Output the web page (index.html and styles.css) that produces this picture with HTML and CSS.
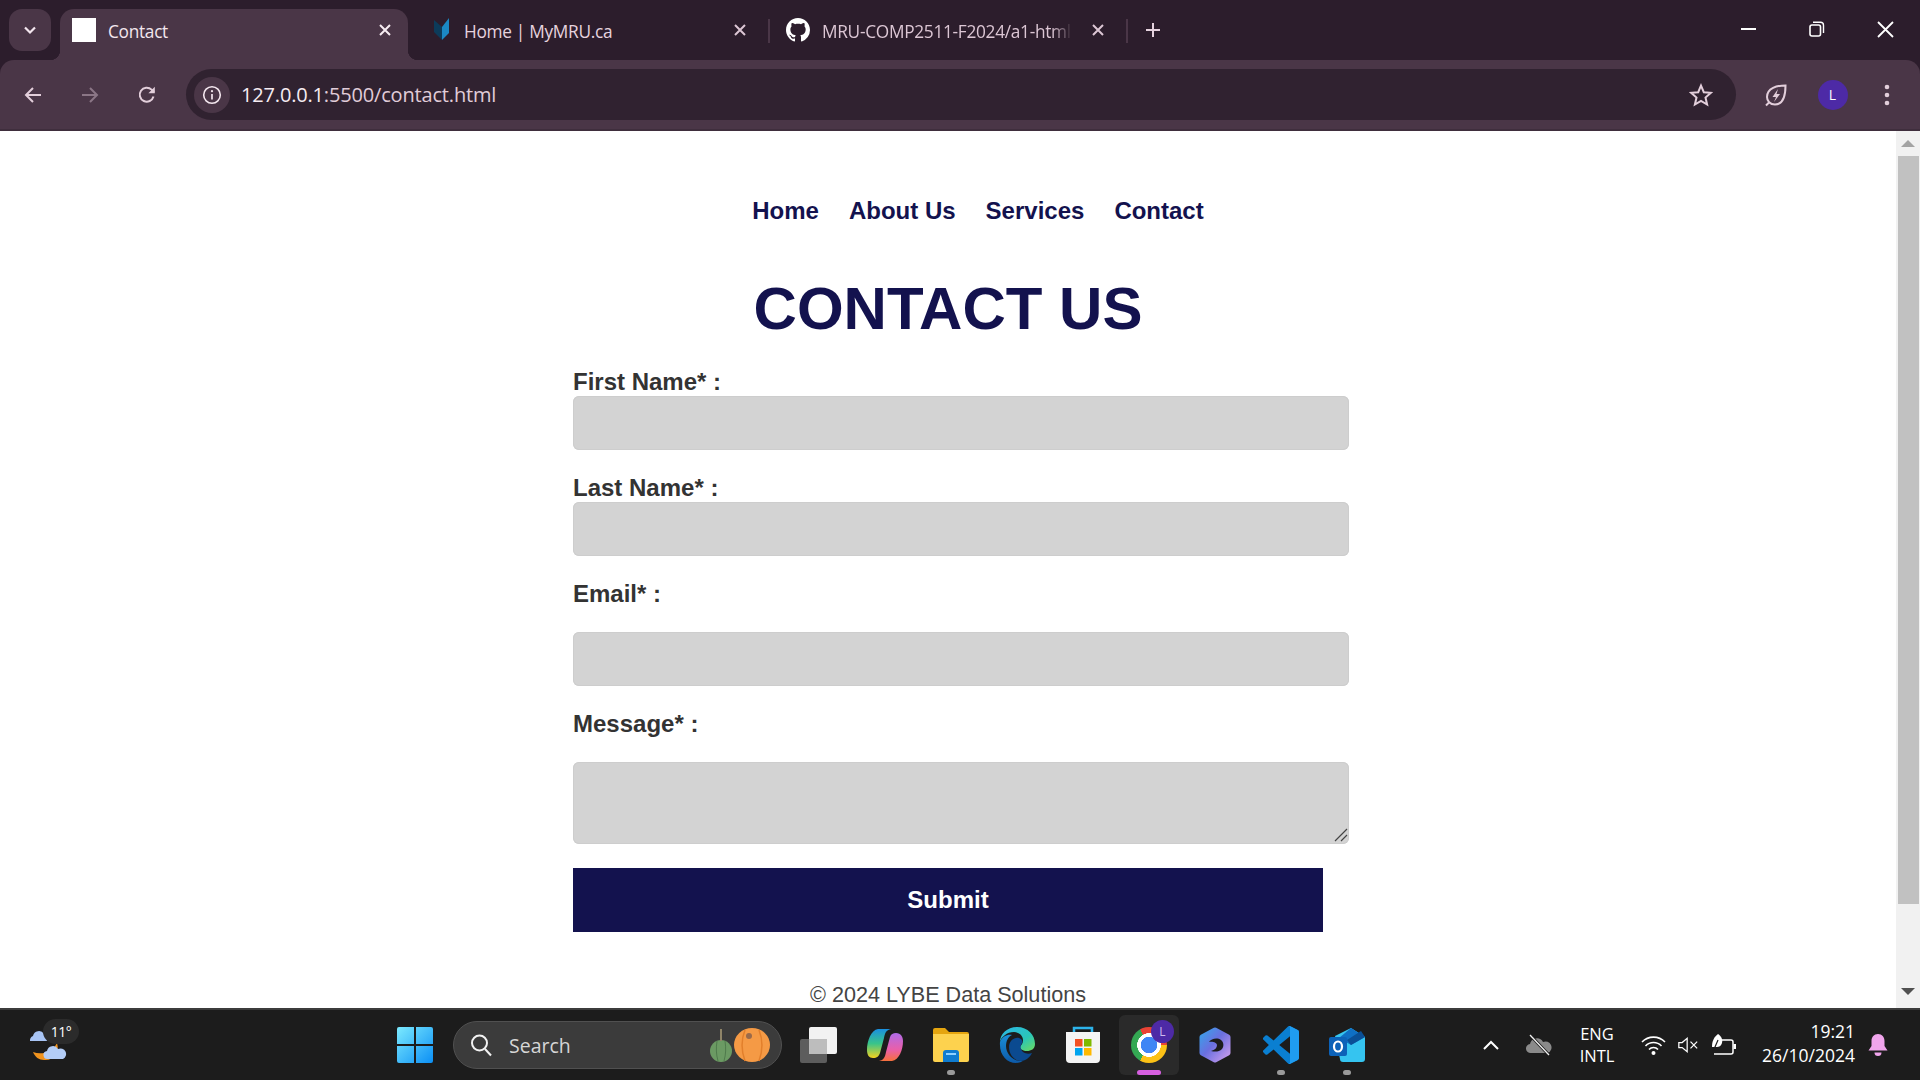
FILE: index.html
```html
<!DOCTYPE html>
<html lang="en">
<head>
    <meta charset="UTF-8">
    <meta name="viewport" content="width=device-width, initial-scale=1.0">
    <title>Contact</title>
    <link rel="stylesheet" href="styles.css">
</head>
<body>
    <div class="tabstrip">
        <div class="tab-search">
            <svg width="16" height="16" viewBox="0 0 16 16"><path d="M3 5.5l5 5 5-5" fill="none" stroke="#f3e6ee" stroke-width="2.2"/></svg>
        </div>
        <div class="tab tab-active">
            <div class="favicon-blank"></div>
            <span class="tab-title">Contact</span>
            <svg class="tab-close" width="14" height="14" viewBox="0 0 14 14"><path d="M2 2l10 10M12 2L2 12" stroke="#f6ecf2" stroke-width="2"/></svg>
        </div>
        <div class="tab tab-second">
            <svg class="favicon" width="18" height="24" viewBox="0 0 18 24"><path d="M1 2l8 7v13L1 14z" fill="#0c3b5a"/><path d="M16 0v15l-7 7V9z" fill="#1b88c4"/></svg>
            <span class="tab-title">Home | MyMRU.ca</span>
            <svg class="tab-close" width="14" height="14" viewBox="0 0 14 14"><path d="M2 2l10 10M12 2L2 12" stroke="#dcc6d4" stroke-width="2"/></svg>
        </div>
        <div class="tab-sep"></div>
        <div class="tab tab-third">
            <svg class="favicon" width="24" height="24" viewBox="0 0 16 16"><path fill="#fff" d="M8 0C3.58 0 0 3.58 0 8c0 3.54 2.29 6.53 5.47 7.59.4.07.55-.17.55-.38 0-.19-.01-.82-.01-1.49-2.01.37-2.53-.49-2.69-.94-.09-.23-.48-.94-.82-1.13-.28-.15-.68-.52-.01-.53.63-.01 1.08.58 1.23.82.72 1.21 1.87.87 2.33.66.07-.52.28-.87.51-1.07-1.78-.2-3.64-.89-3.64-3.95 0-.87.31-1.59.82-2.15-.08-.2-.36-1.02.08-2.12 0 0 .67-.21 2.2.82.64-.18 1.32-.27 2-.27.68 0 1.36.09 2 .27 1.53-1.04 2.2-.82 2.2-.82.44 1.1.16 1.92.08 2.12.51.56.82 1.27.82 2.15 0 3.07-1.87 3.75-3.65 3.95.29.25.54.73.54 1.48 0 1.07-.01 1.93-.01 2.2 0 .21.15.46.55.38A8.013 8.013 0 0016 8c0-4.42-3.58-8-8-8z"/></svg>
            <span class="tab-title tab-title-fade">MRU-COMP2511-F2024/a1-html</span>
            <svg class="tab-close" width="14" height="14" viewBox="0 0 14 14"><path d="M2 2l10 10M12 2L2 12" stroke="#dcc6d4" stroke-width="2"/></svg>
        </div>
        <div class="tab-sep"></div>
        <div class="tab-new">
            <svg width="16" height="16" viewBox="0 0 16 16"><path d="M8 1v14M1 8h14" stroke="#e6d3df" stroke-width="2"/></svg>
        </div>
        <div class="win-controls">
            <div class="win-btn"><svg width="16" height="16" viewBox="0 0 16 16"><path d="M0 8h15" stroke="#fff" stroke-width="2"/></svg></div>
            <div class="win-btn"><svg width="16" height="16" viewBox="0 0 16 16"><rect x="1" y="4" width="10.5" height="11" rx="2" fill="none" stroke="#fff" stroke-width="1.6"/><path d="M4 1.2h7.5a3 3 0 0 1 3 3V12" fill="none" stroke="#fff" stroke-width="1.4"/></svg></div>
            <div class="win-btn"><svg width="17" height="17" viewBox="0 0 17 17"><path d="M1 1l15 15M16 1L1 16" stroke="#fff" stroke-width="1.8"/></svg></div>
        </div>
    </div>

    <div class="toolbar">
        <div class="tool-btn"><svg width="20" height="20" viewBox="0 0 20 20"><path d="M18 10H3M10 3l-7 7 7 7" fill="none" stroke="#e3cfdb" stroke-width="2"/></svg></div>
        <div class="tool-btn"><svg width="20" height="20" viewBox="0 0 20 20"><path d="M2 10h15M10 3l7 7-7 7" fill="none" stroke="#8b7686" stroke-width="2"/></svg></div>
        <div class="tool-btn"><svg width="20" height="20" viewBox="0 0 20 20"><path d="M16.5 11.5A7 7 0 1 1 14.6 4.6L17 7" fill="none" stroke="#e3cfdb" stroke-width="2"/><path d="M17.8 1.8v6.4h-6.4z" fill="#e3cfdb"/></svg></div>
        <div class="omnibox">
            <div class="site-info">
                <svg width="20" height="20" viewBox="0 0 20 20"><circle cx="10" cy="10" r="8.3" fill="none" stroke="#f3e6ee" stroke-width="1.6"/><path d="M10 9v5.5" stroke="#f3e6ee" stroke-width="1.7"/><circle cx="10" cy="6.2" r="1.1" fill="#f3e6ee"/></svg>
            </div>
            <span class="url"><span class="url-host">127.0.0.1</span>:5500/contact.html</span>
            <svg class="star" width="24" height="24" viewBox="0 0 24 24"><path d="M12 2.6l2.8 6.6 7.1.6-5.4 4.7 1.6 7-6.1-3.7-6.1 3.7 1.6-7-5.4-4.7 7.1-.6z" fill="none" stroke="#e3cfdb" stroke-width="2" stroke-linejoin="miter"/></svg>
        </div>
        <div class="tool-btn tool-first">
            <svg width="24" height="24" viewBox="0 0 24 24"><path d="M21.5 2.5C13 2.5 3 5 3 14c0 4 3 7.5 8 7.5 8 0 10.5-9 10.5-19z" fill="none" stroke="#e3cfdb" stroke-width="2"/><path d="M2 22.5l3-3" stroke="#e3cfdb" stroke-width="2"/><path d="M14 6l-5.5 8H12l-2 5 6-8h-3.5l1.5-5z" fill="#e3cfdb"/></svg>
        </div>
        <div class="tool-btn"><div class="avatar">L</div></div>
        <div class="tool-btn tool-last">
            <svg width="6" height="24" viewBox="0 0 6 24"><circle cx="3" cy="4" r="2.3" fill="#e3cfdb"/><circle cx="3" cy="12" r="2.3" fill="#e3cfdb"/><circle cx="3" cy="20" r="2.3" fill="#e3cfdb"/></svg>
        </div>
    </div>

    <div class="viewport">
        <div class="page">
            <ul class="nav">
                <li><a href="#">Home</a></li>
                <li><a href="#">About Us</a></li>
                <li><a href="#">Services</a></li>
                <li><a href="#">Contact</a></li>
            </ul>
            <h1>CONTACT US</h1>
            <form class="contact-form">
                <label for="first">First Name* :</label>
                <input type="text" id="first">
                <label for="last">Last Name* :</label>
                <input type="text" id="last">
                <label for="email" class="label-wide">Email* :</label>
                <input type="text" id="email">
                <label for="message" class="label-wide">Message* :</label>
                <div class="message-box">
                    <textarea id="message"></textarea>
                    <svg class="grip" width="14" height="14" viewBox="0 0 14 14"><path d="M1 13L13 1M7 13l6-6" stroke="#444" stroke-width="1.2"/></svg>
                </div>
                <button type="button">Submit</button>
            </form>
            <footer class="page-footer">© 2024 LYBE Data Solutions</footer>
        </div>
        <div class="scrollbar">
            <div class="arrow-up"></div>
            <div class="thumb"></div>
            <div class="arrow-down"></div>
        </div>
    </div>

    <div class="taskbar">
        <div class="weather">
            <svg width="38" height="34" viewBox="0 0 38 34"><path d="M28 15c3 9-3 18-13 17-5 0-9-3-11-8 8 3 19 1 24-9z" fill="#f0931e"/><path d="M1 13a5 5 0 0 1 3-5 6 6 0 0 1 11-2h3v7z" fill="#a8c4f4"/><path d="M19 31a4 4 0 0 1-1-8 6 6 0 0 1 11-2 5 5 0 0 1 5 10z" fill="#b3cdf7"/></svg>
            <span class="temp">11°</span>
        </div>
        <div class="start">
            <svg width="36" height="36" viewBox="0 0 36 36">
                <defs><linearGradient id="win" x1="0" y1="0" x2="1" y2="1"><stop offset="0" stop-color="#7ceafe"/><stop offset="1" stop-color="#0b8ff5"/></linearGradient></defs>
                <path d="M0 2a2 2 0 0 1 2-2h15v17H0zM19 0h15a2 2 0 0 1 2 2v15H19zM0 19h17v17H2a2 2 0 0 1-2-2zM19 19h17v15a2 2 0 0 1-2 2H19z" fill="url(#win)"/>
            </svg>
        </div>
        <div class="search">
            <svg width="24" height="24" viewBox="0 0 24 24"><circle cx="10.5" cy="10" r="7.5" fill="none" stroke="#f2f2f2" stroke-width="2"/><path d="M16 16l6 6.5" stroke="#f2f2f2" stroke-width="2"/></svg>
            <span class="search-text">Search</span>
            <svg class="pumpkins" width="62" height="36" viewBox="0 0 62 36">
                <ellipse cx="12" cy="24" rx="11" ry="11" fill="#6b9a63"/><path d="M12 14V2" stroke="#8f8468" stroke-width="2"/><path d="M8 14c-1 7-1 13 1 20M16 14c1 7 1 13-1 20" stroke="#4f7a4c" fill="none"/>
                <ellipse cx="43" cy="18" rx="18" ry="17" fill="#f59a45"/><path d="M36 3c-4 10-4 20 0 31M50 3c4 10 4 20 0 31" stroke="#e27f2b" fill="none" stroke-width="1.5"/><circle cx="40" cy="9" r="3" fill="#9a6a4a"/>
            </svg>
        </div>
        <div class="apps">
            <div class="app">
                <svg width="38" height="36" viewBox="0 0 38 36"><rect x="0" y="12" width="27" height="24" rx="2" fill="#5d5d5d"/><rect x="9" y="0" width="28" height="27" rx="2" fill="#f2f2f2"/><rect x="9" y="12" width="18" height="15" fill="#bdbdbd"/></svg>
            </div>
            <div class="app">
                <svg width="36" height="34" viewBox="0 0 36 34">
                    <defs>
                        <linearGradient id="cop1" x1="0" y1="0" x2="0" y2="1"><stop offset="0" stop-color="#1a8fe0"/><stop offset=".5" stop-color="#38c48a"/><stop offset="1" stop-color="#f4d21e"/></linearGradient>
                        <linearGradient id="cop2" x1="0" y1="0" x2="0" y2="1"><stop offset="0" stop-color="#b06be8"/><stop offset=".6" stop-color="#ea5fa8"/><stop offset="1" stop-color="#f6703c"/></linearGradient>
                    </defs>
                    <path d="M11 1h13c-5 1-6 4-7 9l-4 15c-1 3-3 5-7 5-4 0-6-3-6-8 0-9 4-20 11-21z" fill="url(#cop1)"/>
                    <path d="M25 33H12c5-1 6-4 7-9l4-15c1-3 3-4 6-4 5 0 7 4 7 8 0 9-4 19-11 20z" fill="url(#cop2)"/>
                </svg>
            </div>
            <div class="app">
                <svg width="36" height="34" viewBox="0 0 36 34"><path d="M0 2a2 2 0 0 1 2-2h10l4 4h18a2 2 0 0 1 2 2v5H0z" fill="#e5a50f"/><path d="M0 6h36v26a2 2 0 0 1-2 2H2a2 2 0 0 1-2-2z" fill="#fdd24e"/><path d="M10 34V25a3 3 0 0 1 3-3h10a3 3 0 0 1 3 3v9z" fill="#0f7cd0"/><rect x="13" y="25" width="10" height="2" fill="#8ed1ff"/></svg>
            </div>
            <div class="app">
                <svg width="36" height="36" viewBox="0 0 36 36">
                    <defs>
                        <linearGradient id="edge1" x1="0" y1="0" x2="1" y2="1"><stop offset="0" stop-color="#2bb6e8"/><stop offset=".6" stop-color="#2ac6b8"/><stop offset="1" stop-color="#6fdc5c"/></linearGradient>
                        <linearGradient id="edge2" x1="0" y1="0" x2="0" y2="1"><stop offset="0" stop-color="#1a8fd8"/><stop offset="1" stop-color="#0d5aa8"/></linearGradient>
                    </defs>
                    <path d="M18 0c11 0 18 8 18 17 0 5-4 7-8 7-4 0-7-2-7-4 1-2 3-3 3-7 0-5-5-8-9-8C8 5 2 10 1 15 1 7 8 0 18 0z" fill="url(#edge1)"/>
                    <path d="M1 15C3 9 9 7 13 8c-4 2-6 6-6 11 0 8 7 15 15 15 1 0 2 0 3-1-2 2-5 3-8 3C8 36 0 28 1 15z" fill="url(#edge2)"/>
                    <path d="M10 20c0-6 5-10 10-9 3 1 4 3 3 5-2 3-2 6 1 9 3 2 6 2 9 1-2 4-6 8-11 8-7 0-12-7-12-14z" fill="#0b4a90"/>
                </svg>
            </div>
            <div class="app">
                <svg width="36" height="38" viewBox="0 0 36 38"><path d="M9 6V2h18v4" fill="none" stroke="#2cb3ea" stroke-width="2.5"/><path d="M1 6h34v27a4 4 0 0 1-4 4H5a4 4 0 0 1-4-4z" fill="#f4f4f4"/><rect x="10" y="13" width="7.5" height="7.5" fill="#f25022"/><rect x="19" y="13" width="7.5" height="7.5" fill="#7fba00"/><rect x="10" y="22" width="7.5" height="7.5" fill="#00a4ef"/><rect x="19" y="22" width="7.5" height="7.5" fill="#ffb900"/></svg>
            </div>
            <div class="app app-open">
                <div class="chrome-icon"></div>
                <div class="chrome-badge">L</div>
                <div class="app-bar"></div>
            </div>
            <div class="app">
                <svg width="32" height="36" viewBox="0 0 32 36">
                    <defs><linearGradient id="m365" x1="0" y1="0" x2="1" y2="1"><stop offset="0" stop-color="#3aa0e8"/><stop offset=".45" stop-color="#6a6fe0"/><stop offset="1" stop-color="#c99cec"/></linearGradient></defs>
                    <path d="M16 3l13 7v16l-13 7-13-7V10z" fill="url(#m365)" stroke="url(#m365)" stroke-width="5" stroke-linejoin="round"/>
                    <path d="M10 15c2-3 8-5 12-2 3 2 3 7 1 9-3 3-7 3-11 2 4-1 6-3 6-6 0-2-4-4-8-3z" fill="#1c1c1c"/>
                </svg>
            </div>
            <div class="app">
                <svg width="36" height="38" viewBox="0 0 24 24" preserveAspectRatio="none"><path fill="#0a7fd1" d="M23.15 2.587L18.21.21a1.494 1.494 0 0 0-1.705.29l-9.46 8.63-4.12-3.128a.999.999 0 0 0-1.276.057L.327 7.261A1 1 0 0 0 .326 8.74L3.899 12 .326 15.26a1 1 0 0 0 .001 1.479L1.65 17.94a.999.999 0 0 0 1.276.057l4.12-3.128 9.46 8.63a1.492 1.492 0 0 0 1.704.29l4.942-2.377A1.5 1.5 0 0 0 24 20.06V3.939a1.5 1.5 0 0 0-.85-1.352zm-5.146 14.861L10.826 12l7.178-5.448v10.896z"/><path fill="#1f9cf0" d="M16.5.5a1.5 1.5 0 0 1 1.71-.29l4.94 2.377A1.5 1.5 0 0 1 24 3.939V20.06a1.5 1.5 0 0 1-.85 1.352l-4.94 2.378a1.5 1.5 0 0 1-1.71-.29c.6.6 1.5.2 1.5-.6V1.1c0-.8-.9-1.2-1.5-.6z"/></svg>
            </div>
            <div class="app">
                <svg width="36" height="34" viewBox="0 0 36 34"><path d="M6 8L22 0l14 9v22a3 3 0 0 1-3 3H14a3 3 0 0 1-3-3z" fill="#35c4f0"/><path d="M10 10L22 0l14 9-14 8z" fill="#0f6fc4"/><path d="M22 17l14-8v0l-4-6-14 9z" fill="#0a4f96"/><rect x="0" y="9" width="18" height="19" rx="2" fill="#0c62b8"/><ellipse cx="9" cy="18.5" rx="4" ry="5" fill="none" stroke="#fff" stroke-width="2.2"/></svg>
            </div>
        </div>
        <div class="tray">
            <div class="tray-caret"><svg width="16" height="10" viewBox="0 0 16 10"><path d="M1 9l7-7 7 7" fill="none" stroke="#fff" stroke-width="2"/></svg></div>
            <div class="tray-cloud"><svg width="26" height="22" viewBox="0 0 26 22"><path d="M5 19a4.5 4.5 0 0 1-1-9 7 7 0 0 1 13-2 5.5 5.5 0 0 1 5 11z" fill="#8a8a8a"/><path d="M4 1l19 20" stroke="#1c1c1c" stroke-width="3"/><path d="M4 1l19 20" stroke="#f2f2f2" stroke-width="1.3"/></svg></div>
            <div class="tray-lang">ENG<br>INTL</div>
            <div class="tray-wifi"><svg width="25" height="20" viewBox="0 0 25 20"><path d="M1 7a16 16 0 0 1 23 0M4.5 11a11 11 0 0 1 16 0M8 14.5a6 6 0 0 1 9 0" fill="none" stroke="#fff" stroke-width="1.6"/><circle cx="12.5" cy="18" r="2" fill="#fff"/></svg></div>
            <div class="tray-speaker"><svg width="24" height="20" viewBox="0 0 24 20"><path d="M1 7v6h4l6 5V2L5 7z" fill="none" stroke="#fff" stroke-width="1.5"/><path d="M15 6l8 8M23 6l-8 8" stroke="#fff" stroke-width="1.5"/></svg></div>
            <div class="tray-battery"><svg width="26" height="22" viewBox="0 0 26 22"><path d="M11 6h9a2 2 0 0 1 2 2v10a2 2 0 0 1-2 2H3" fill="none" stroke="#fff" stroke-width="1.5"/><rect x="22.5" y="10" width="2.5" height="5" fill="#fff"/><path d="M7 0c3 2 5 5 4 9-1 3-3 4-5 4H1c0-6 2-10 6-13z" fill="#fff"/><path d="M1 20L7 6" stroke="#1c1c1c" stroke-width="1.2"/></svg></div>
            <div class="tray-clock">19:21<br>26/10/2024</div>
            <div class="tray-bell"><svg width="20" height="24" viewBox="0 0 20 24"><path d="M10 1c4 0 6.5 3 6.5 7v5l3 4.5H.5l3-4.5V8c0-4 2.5-7 6.5-7z" fill="#f0a5ec"/><path d="M6.5 19.5h7a3.5 3.5 0 0 1-7 0z" fill="#f0a5ec"/></svg></div>
        </div>
    </div>
</body>
</html>
```

FILE: styles.css
```css
* {
    box-sizing: border-box;
}
html, body {
    height: 100%;
}
body {
    margin: 0;
    display: flex;
    flex-direction: column;
    height: 1080px;
    overflow: hidden;
    font-family: "Liberation Sans", Arial, sans-serif;
    background: #2c1d2c;
}

/* browser tabs */
.tabstrip {
    height: 60px;
    flex: none;
    display: flex;
    align-items: flex-end;
    padding-left: 9px;
    background: #2c1d2c;
    font-family: "Open Sans", "Noto Sans", sans-serif;
    font-size: 17.3px;
}
.tab-search {
    width: 42px;
    height: 42px;
    margin-bottom: 9px;
    margin-right: 9px;
    border-radius: 13px;
    background: #4a3647;
    display: flex;
    align-items: center;
    justify-content: center;
}
.tab {
    height: 51px;
    display: flex;
    align-items: center;
    flex: none;
}
.tab-active {
    position: relative;
    width: 348px;
    padding: 0 16px 9px 12px;
    background: #4a3647;
    border-radius: 14px 14px 0 0;
    color: #f3e6ee;
}
.tab-active::before, .tab-active::after {
    content: "";
    position: absolute;
    bottom: 0;
    width: 10px;
    height: 10px;
}
.tab-active::before {
    left: -10px;
    background: radial-gradient(circle at 0 0, transparent 10px, #4a3647 10.5px);
}
.tab-active::after {
    right: -10px;
    background: radial-gradient(circle at 100% 0, transparent 10px, #4a3647 10.5px);
}
.tab-second {
    width: 360px;
    padding: 0 21px 9px 25px;
    color: #e6d3df;
}
.tab-third {
    width: 356px;
    padding: 0 21px 9px 16px;
    color: #dcc6d4;
}
.favicon-blank {
    width: 24px;
    height: 24px;
    background: #fff;
    margin-right: 12px;
    flex: none;
}
.favicon {
    flex: none;
    margin-right: 12px;
}
.tab-second .favicon {
    margin-right: 13px;
}
.tab-title {
    flex: 1;
    padding-top: 2px;
    white-space: nowrap;
    overflow: hidden;
    letter-spacing: -0.3px;
}
.tab-title-fade {
    margin-right: 19px;
    -webkit-mask-image: linear-gradient(to right, #000 92%, transparent);
    mask-image: linear-gradient(to right, #000 92%, transparent);
}
.tab-close {
    flex: none;
}
.tab-sep {
    width: 2px;
    height: 24px;
    margin-bottom: 17px;
    background: #4a3647;
    flex: none;
}
.tab-new {
    width: 50px;
    height: 51px;
    padding-bottom: 9px;
    display: flex;
    align-items: center;
    justify-content: center;
}
.win-controls {
    margin-left: auto;
    align-self: stretch;
    display: flex;
}
.win-btn {
    width: 68.5px;
    display: flex;
    align-items: center;
    justify-content: center;
    padding-bottom: 2px;
}

/* address bar row */
.toolbar {
    height: 71px;
    flex: none;
    display: flex;
    align-items: center;
    padding: 0 2px 0 4px;
    background: #4a3647;
    border-radius: 14px 14px 0 0;
    border-bottom: 2px solid #3f2e3d;
    font-family: "Open Sans", "Noto Sans", sans-serif;
}
.tool-btn {
    width: 57px;
    display: flex;
    align-items: center;
    justify-content: center;
    flex: none;
}
.tool-first {
    margin-left: 11px;
}
.tool-last {
    padding-right: 5px;
}
.omnibox {
    flex: 1;
    height: 51px;
    margin-left: 11px;
    padding: 0 23px 0 8px;
    display: flex;
    align-items: center;
    border-radius: 26px;
    background: #302230;
}
.site-info {
    width: 36px;
    height: 36px;
    border-radius: 50%;
    background: #4a3647;
    display: flex;
    align-items: center;
    justify-content: center;
    margin-right: 11px;
}
.url {
    flex: 1;
    font-size: 20px;
    letter-spacing: -0.17px;
    color: #e0ccd8;
}
.url-host {
    color: #f6ecf2;
}
.avatar {
    width: 30px;
    height: 30px;
    border-radius: 50%;
    background: #4d2aa6;
    color: #fff;
    font-size: 14px;
    text-align: center;
    line-height: 30px;
}

/* page */
.viewport {
    flex: 1;
    display: flex;
    min-height: 0;
    background: #fff;
}
.page {
    flex: 1;
    overflow: hidden;
    padding-top: 66px;
}
.nav {
    list-style: none;
    margin: 0;
    padding: 0 0 0 60px;
    display: flex;
    justify-content: center;
    gap: 30px;
    font-size: 24px;
    font-weight: bold;
}
.nav a {
    color: #13124e;
    text-decoration: none;
}
h1 {
    margin: 49px 0 25px;
    text-align: center;
    font-size: 60px;
    color: #13124e;
}
.contact-form {
    width: 750px;
    margin: 0 auto;
}
label {
    display: block;
    margin-top: 24px;
    font-size: 24px;
    line-height: 28px;
    font-weight: bold;
    color: #333;
}
.contact-form label:first-child {
    margin-top: 0;
}
.label-wide {
    margin-bottom: 24px;
}
input, textarea {
    display: block;
    box-sizing: content-box;
    width: 100%;
    padding: 0 13px;
    border: 0;
    border-radius: 6px;
    background: #d3d3d3;
    box-shadow: inset 0 0 0 1px #cdcdcd;
}
input {
    height: 54px;
}
textarea {
    height: 82px;
    resize: none;
}
.message-box {
    position: relative;
}
.grip {
    position: absolute;
    left: 761px;
    bottom: 2px;
}
button {
    display: block;
    width: 100%;
    height: 64px;
    margin-top: 24px;
    border: 0;
    background: #13124e;
    color: #fff;
    font-family: inherit;
    font-size: 24px;
    font-weight: bold;
    cursor: pointer;
}
.page-footer {
    margin-top: 50px;
    text-align: center;
    font-size: 21.6px;
    color: #444;
}
.scrollbar {
    width: 24px;
    flex: none;
    background: #f1f1f1;
    display: flex;
    flex-direction: column;
    align-items: center;
}
.arrow-up {
    margin-top: 9px;
    border: 7px solid transparent;
    border-top: 0;
    border-bottom: 7px solid #a3a3a3;
}
.thumb {
    width: 21px;
    height: 748px;
    margin-top: 9px;
    background: #c1c1c1;
}
.arrow-down {
    margin-top: 84px;
    border: 7px solid transparent;
    border-bottom: 0;
    border-top: 7px solid #505050;
}

/* windows taskbar */
.taskbar {
    height: 72px;
    flex: none;
    display: flex;
    align-items: center;
    background: #1c1c1c;
    border-top: 2px solid #3c3c3c;
    font-family: "Open Sans", "Noto Sans", sans-serif;
    color: #fff;
}
.weather {
    position: relative;
    width: 382px;
    padding-left: 29px;
    display: flex;
    align-items: center;
    flex: none;
}
.temp {
    position: absolute;
    left: 43px;
    top: -9px;
    width: 36px;
    height: 25px;
    border-radius: 13px;
    background: #2b2b2b;
    text-align: center;
    font-size: 14px;
    line-height: 25px;
    letter-spacing: -0.5px;
}
.start {
    width: 66px;
    display: flex;
    justify-content: center;
    flex: none;
}
.search {
    width: 329px;
    height: 48px;
    margin-left: 5px;
    padding: 0 10px 0 15px;
    display: flex;
    align-items: center;
    border-radius: 24px;
    background: #3b3b3b;
    border: 1.5px solid #505050;
    flex: none;
}
.search-text {
    flex: 1;
    margin-left: 16px;
    font-size: 19.5px;
    color: #d6d6d6;
}
.apps {
    margin-left: 4px;
    display: flex;
    flex: none;
}
.app {
    position: relative;
    width: 66px;
    height: 60px;
    display: flex;
    align-items: center;
    justify-content: center;
}
.app:nth-child(3)::after, .app:nth-child(8)::after, .app:nth-child(9)::after {
    content: "";
    position: absolute;
    left: 29px;
    bottom: 0;
    width: 8px;
    height: 5px;
    border-radius: 3px;
    background: #9a9a9a;
}
.app-open {
    width: 60px;
    margin: 0 3px;
    background: #2a2a2a;
    border-radius: 6px;
}
.chrome-icon {
    width: 36px;
    height: 36px;
    border-radius: 50%;
    background: radial-gradient(circle, #3f86f5 0 32%, #fff 33% 46%, transparent 47%), conic-gradient(#ea4335 0 90deg, #fbc116 90deg 210deg, #34a853 210deg 330deg, #ea4335 330deg);
}
.chrome-badge {
    position: absolute;
    left: 32px;
    top: 5px;
    width: 23px;
    height: 23px;
    border-radius: 50%;
    background: #4d2aa6;
    font-size: 12px;
    line-height: 23px;
    text-align: center;
    color: #cdbcf0;
}
.app-bar {
    position: absolute;
    left: 18px;
    bottom: 0;
    width: 24px;
    height: 5px;
    border-radius: 3px;
    background: #d65fe0;
}
.tray {
    margin-left: 90px;
    display: flex;
    align-items: center;
    flex: none;
    font-size: 16.5px;
    line-height: 22px;
}
.tray > div {
    display: flex;
    justify-content: center;
}
.tray-caret {
    width: 42px;
}
.tray-cloud {
    width: 54px;
}
.tray .tray-lang {
    width: 62px;
    text-align: center;
    display: block;
}
.tray-wifi {
    width: 50px;
}
.tray-speaker {
    width: 20px;
}
.tray-battery {
    width: 52px;
}
.tray .tray-clock {
    width: 105px;
    padding-bottom: 4px;
    font-size: 17.5px;
    line-height: 24px;
    text-align: right;
    display: block;
}
.tray-bell {
    width: 46px;
}
```
